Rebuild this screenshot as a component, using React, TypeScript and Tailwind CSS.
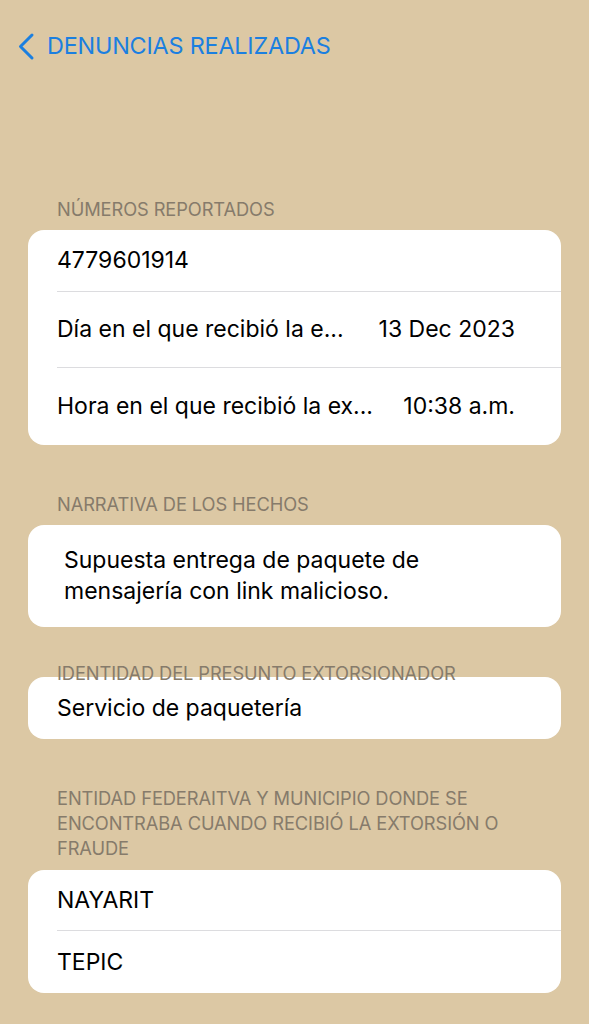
type Row = { label: string; value?: string };

function SectionLabel({ children, className = "" }: { children: React.ReactNode; className?: string }) {
  return (
    <p className={`px-[57px] text-[18.3px] leading-[25px] tracking-[-0.1px] text-[#867b6b] ${className}`}>
      {children}
    </p>
  );
}

function ListCard({ rows, heights }: { rows: Row[]; heights: string[] }) {
  return (
    <div className="mx-[28px] overflow-hidden rounded-[16px] bg-white">
      {rows.map((r, i) => (
        <div key={i} className="pl-[29px]">
          <div
            className={`flex items-center justify-between pr-[46px] text-[23px] text-black ${heights[i]} ${
              i < rows.length - 1 ? "border-b border-[#dcdcdf]" : ""
            }`}
          >
            <span>{r.label}</span>
            {r.value && <span>{r.value}</span>}
          </div>
        </div>
      ))}
    </div>
  );
}

export default function App() {
  return (
    <div
      className="min-h-[1024px] w-full bg-[#dcc8a4]"
      style={{ fontFamily: "Inter, 'Noto Sans', sans-serif" }}
    >
      {/* barra de navegación */}
      <div className="flex items-center gap-[11px] pl-[16px] pt-[30px] text-[#1b7fe0]">
        <svg width="20" height="30" viewBox="0 0 20 30" fill="none">
          <path d="M16 4 L4.5 15.5 L16 27" stroke="currentColor" strokeWidth="3" strokeLinecap="round" strokeLinejoin="round" />
        </svg>
        <span className="text-[23.4px] leading-[32px] tracking-[-0.2px]">DENUNCIAS REALIZADAS</span>
      </div>

      <SectionLabel className="mt-[135px]">NÚMEROS REPORTADOS</SectionLabel>
      <div className="mt-[8px]">
        <ListCard
          heights={["h-[62px]", "h-[76px]", "h-[77px]"]}
          rows={[
            { label: "4779601914" },
            { label: "Día en el que recibió la e...", value: "13 Dec 2023" },
            { label: "Hora en el que recibió la ex...", value: "10:38 a.m." },
          ]}
        />
      </div>

      <SectionLabel className="mt-[47px]">NARRATIVA DE LOS HECHOS</SectionLabel>
      <div className="mx-[28px] mt-[8px] rounded-[16px] bg-white px-[36px] pb-[20px] pt-[20px] text-[23px] leading-[31px] text-black">
        Supuesta entrega de paquete de
        <br />
        mensajería con link malicioso.
      </div>

      <SectionLabel className="mt-[34px]">IDENTIDAD DEL PRESUNTO EXTORSIONADOR</SectionLabel>
      <div className="-mt-[9px]">
        <ListCard heights={["h-[62px]"]} rows={[{ label: "Servicio de paquetería" }]} />
      </div>

      <SectionLabel className="mt-[47px]">
        ENTIDAD FEDERAITVA Y MUNICIPIO DONDE SE ENCONTRABA CUANDO RECIBIÓ LA EXTORSIÓN O FRAUDE
      </SectionLabel>
      <div className="mt-[9px]">
        <ListCard heights={["h-[61px]", "h-[62px]"]} rows={[{ label: "NAYARIT" }, { label: "TEPIC" }]} />
      </div>
    </div>
  );
}
